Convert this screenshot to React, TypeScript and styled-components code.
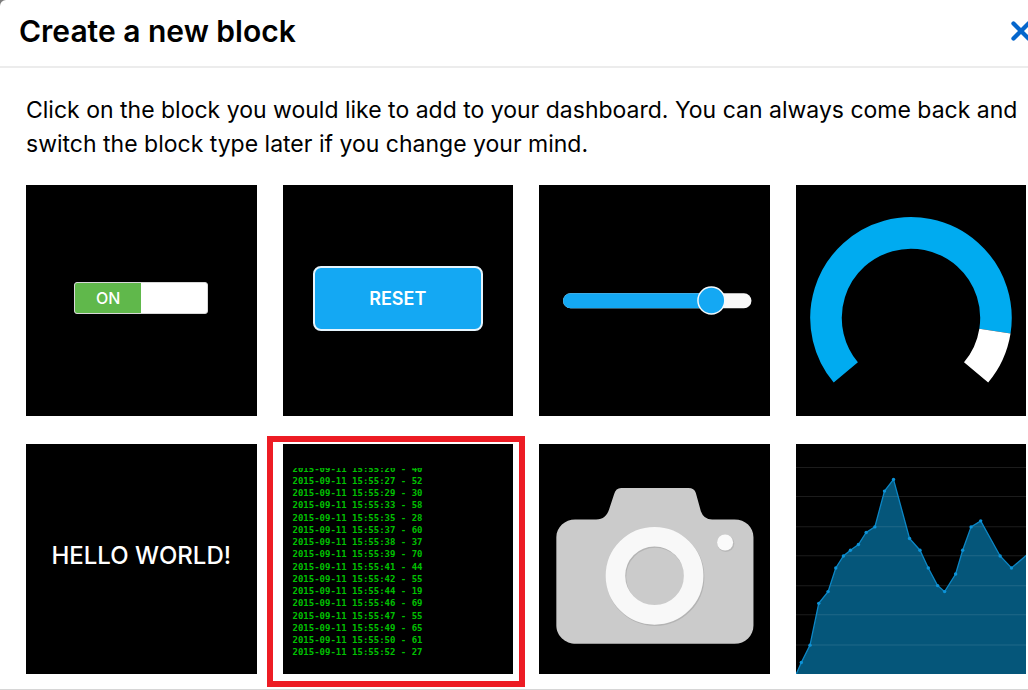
import React from "react";
import styled, { createGlobalStyle } from "styled-components";

const GlobalStyle = createGlobalStyle`
  *, *::before, *::after { box-sizing: border-box; }
  body {
    margin: 0;
    background: #7d7d7d;
    color: #000;
    font-family: Inter, "Liberation Sans", sans-serif;
  }
`;

const Dialog = styled.section`
  background: #fff;
  border-top-left-radius: 6px;
  border-bottom: 1px solid #d6d6d6;
  overflow: hidden;
`;

const Header = styled.header`
  display: flex;
  align-items: center;
  justify-content: space-between;
  height: 68px;
  padding: 0 0 4px 19px;
  border-bottom: 2px solid #ececec;
`;

const Title = styled.h1`
  margin: 0;
  font-size: 30px;
  line-height: 36px;
  font-weight: 600;
`;

const CloseButton = styled.button`
  display: flex;
  flex: none;
  margin-right: -4px;
  padding: 0;
  border: 0;
  background: none;
  cursor: pointer;
`;

const Body = styled.div`
  padding: 25px 2px 15px 26px;
`;

const Intro = styled.p`
  margin: 0 0 24px;
  font-size: 23px;
  line-height: 34px;
`;

const BlockGrid = styled.div`
  display: grid;
  grid-template-columns: repeat(4, minmax(0, 1fr));
  gap: 28px 26px;
`;

const Tile = styled.button<{ $marked?: boolean }>`
  position: relative;
  display: flex;
  align-items: center;
  justify-content: center;
  aspect-ratio: 1;
  min-width: 0;
  padding: 0;
  border: 0;
  background: #000;
  color: #fff;
  font-family: inherit;
  cursor: pointer;

  ${(p) =>
    p.$marked &&
    `&::after {
      content: "";
      position: absolute;
      inset: -8px -12px -13px -16px;
      border: 6px solid #ed1c24;
      pointer-events: none;
    }`}
`;

const Toggle = styled.span`
  display: flex;
  width: 134px;
  height: 32px;
  margin-bottom: 4px;
  border: 1px solid #d8d8d8;
  border-radius: 3px;
  background: #fff;
  overflow: hidden;
`;

const ToggleOn = styled.span`
  display: flex;
  align-items: center;
  justify-content: center;
  width: 50%;
  background: #60b84b;
  font-size: 16px;
  font-weight: 500;
`;

const ResetFace = styled.span`
  display: flex;
  align-items: center;
  justify-content: center;
  width: 170px;
  height: 65px;
  margin-bottom: 4px;
  border: 2px solid #e6f5fe;
  border-radius: 8px;
  background: #14a8f3;
  font-size: 18px;
  font-weight: 600;
`;

const Greeting = styled.span`
  margin-bottom: 6px;
  font-size: 24px;
  line-height: 28px;
  font-weight: 500;
  white-space: nowrap;
`;

const Drawing = styled.svg`
  display: block;
  width: 100%;
  height: 100%;
`;

const LogWindow = styled.span`
  display: block;
  align-self: flex-start;
  width: 100%;
  height: 191px;
  margin-top: 24px;
  padding-left: 10px;
  overflow: hidden;
`;

const LogLines = styled.span`
  display: flex;
  flex-direction: column;
  justify-content: space-between;
  height: 196px;
  margin-top: -5px;
  color: #00c000;
  font-family: "DejaVu Sans Mono", monospace;
  font-size: 9px;
  line-height: 12px;
  font-weight: 700;
  text-align: left;
  white-space: pre;
`;

const readings: [string, number][] = [
  ["26", 40], ["27", 52], ["29", 30], ["33", 58], ["35", 28], ["37", 60],
  ["38", 37], ["39", 70], ["41", 44], ["42", 55], ["44", 19], ["46", 69],
  ["47", 55], ["49", 65], ["50", 61], ["52", 27],
];

const chartPoints: [number, number][] = [
  [0, 230], [5.3, 218], [14, 200.7], [22.7, 159], [32, 147.3], [39.7, 123.7],
  [47.3, 111.7], [54.3, 106], [62.3, 100.3], [70, 88.3], [78.7, 82.7],
  [88.3, 47], [97.3, 35.3], [113.3, 94.3], [123.7, 106], [132, 123.7],
  [141.3, 141.3], [148.3, 147.3], [159.3, 129.7], [166.3, 106],
  [174.7, 82.7], [184.3, 76.7], [203.7, 111.7], [215, 123.7], [230, 111],
];
const chartGrid = [23.5, 52.5, 82.5, 111.5, 141.5, 170.5, 200.5];
const chartLine = chartPoints.map((p) => p.join(",")).join(" ");

const SliderDrawing = () => (
  <Drawing viewBox="0 0 230 230" aria-hidden="true">
    <rect x="24" y="108" width="188" height="15" rx="7.5" fill="#f8f8f8" />
    <path d="M31.5 108H172v15H31.5a7.5 7.5 0 0 1 0-15z" fill="#14a8f3" />
    <circle cx="172" cy="115.3" r="13.4" fill="#14a8f3" stroke="#f4f9fc" strokeWidth="1.5" />
  </Drawing>
);

const GaugeDrawing = () => (
  <Drawing viewBox="0 0 230 230" fill="none" strokeWidth="31.5" aria-hidden="true">
    <path d="M49.7 187A84.8 84.8 0 1 1 198.5 145.8" stroke="#00abf0" />
    <path d="M198.5 145.8A84.8 84.8 0 0 1 179.7 187" stroke="#fff" />
  </Drawing>
);

const CameraDrawing = () => (
  <Drawing viewBox="0 0 230 230" aria-hidden="true">
    <path
      d="M36 75.3H57C64 75.3 68 71 70 65L75 50Q76.6 44 82 44H149Q155 44 156.5 49L161.5 67Q164.5 75.3 172.7 75.3H195C206 75.3 214 83 214 93V181C214 191 206 199.3 195 199.3H37C26 199.3 17.3 191 17.3 181V93C17.3 83 26 75.3 36 75.3Z"
      fill="#cbcbcb"
    />
    <circle cx="116" cy="132.6" r="39" fill="none" stroke="#b4b4b4" strokeWidth="20" />
    <circle cx="115.3" cy="131.5" r="39" fill="none" stroke="#f8f8f8" strokeWidth="19.5" />
    <circle cx="186.4" cy="99.2" r="8.5" fill="#b8b8b8" />
    <circle cx="185.7" cy="98.3" r="8" fill="#fafafa" />
  </Drawing>
);

const ChartDrawing = () => (
  <Drawing viewBox="0 0 230 230" aria-hidden="true">
    <polygon points={`${chartLine} 230,230`} fill="#05567a" />
    {chartGrid.map((y) => (
      <line key={y} x1="0" x2="230" y1={y} y2={y} stroke="#fff" strokeOpacity="0.11" />
    ))}
    <polyline points={chartLine} fill="none" stroke="#0c87c6" strokeWidth="1.3" />
    {chartPoints.slice(1, -1).map(([x, y]) => (
      <circle key={x} cx={x} cy={y} r="1.7" fill="#0d93d8" />
    ))}
  </Drawing>
);

export default function App() {
  return (
    <>
      <GlobalStyle />
      <Dialog role="dialog" aria-labelledby="dialog-title">
        <Header>
          <Title id="dialog-title">Create a new block</Title>
          <CloseButton type="button" aria-label="Close">
            <svg width="22" height="22" viewBox="0 0 22 22" aria-hidden="true">
              <path d="M3.5 3.5 18.5 18.5M18.5 3.5 3.5 18.5" stroke="#0566cc" strokeWidth="4.3" strokeLinecap="round" />
            </svg>
          </CloseButton>
        </Header>
        <Body>
          <Intro>
            Click on the block you would like to add to your dashboard. You can always come back and
            switch the block type later if you change your mind.
          </Intro>
          <BlockGrid>
            <Tile type="button" aria-label="Toggle block">
              <Toggle>
                <ToggleOn>ON</ToggleOn>
              </Toggle>
            </Tile>
            <Tile type="button" aria-label="Momentary button block">
              <ResetFace>RESET</ResetFace>
            </Tile>
            <Tile type="button" aria-label="Slider block">
              <SliderDrawing />
            </Tile>
            <Tile type="button" aria-label="Gauge block">
              <GaugeDrawing />
            </Tile>
            <Tile type="button" aria-label="Text block">
              <Greeting>HELLO WORLD!</Greeting>
            </Tile>
            <Tile type="button" aria-label="Stream block" $marked>
              <LogWindow>
                <LogLines>
                  {readings.map(([second, value]) => (
                    <span key={second}>{`2015-09-11 15:55:${second} - ${value}`}</span>
                  ))}
                </LogLines>
              </LogWindow>
            </Tile>
            <Tile type="button" aria-label="Image block">
              <CameraDrawing />
            </Tile>
            <Tile type="button" aria-label="Line chart block">
              <ChartDrawing />
            </Tile>
          </BlockGrid>
        </Body>
      </Dialog>
    </>
  );
}
